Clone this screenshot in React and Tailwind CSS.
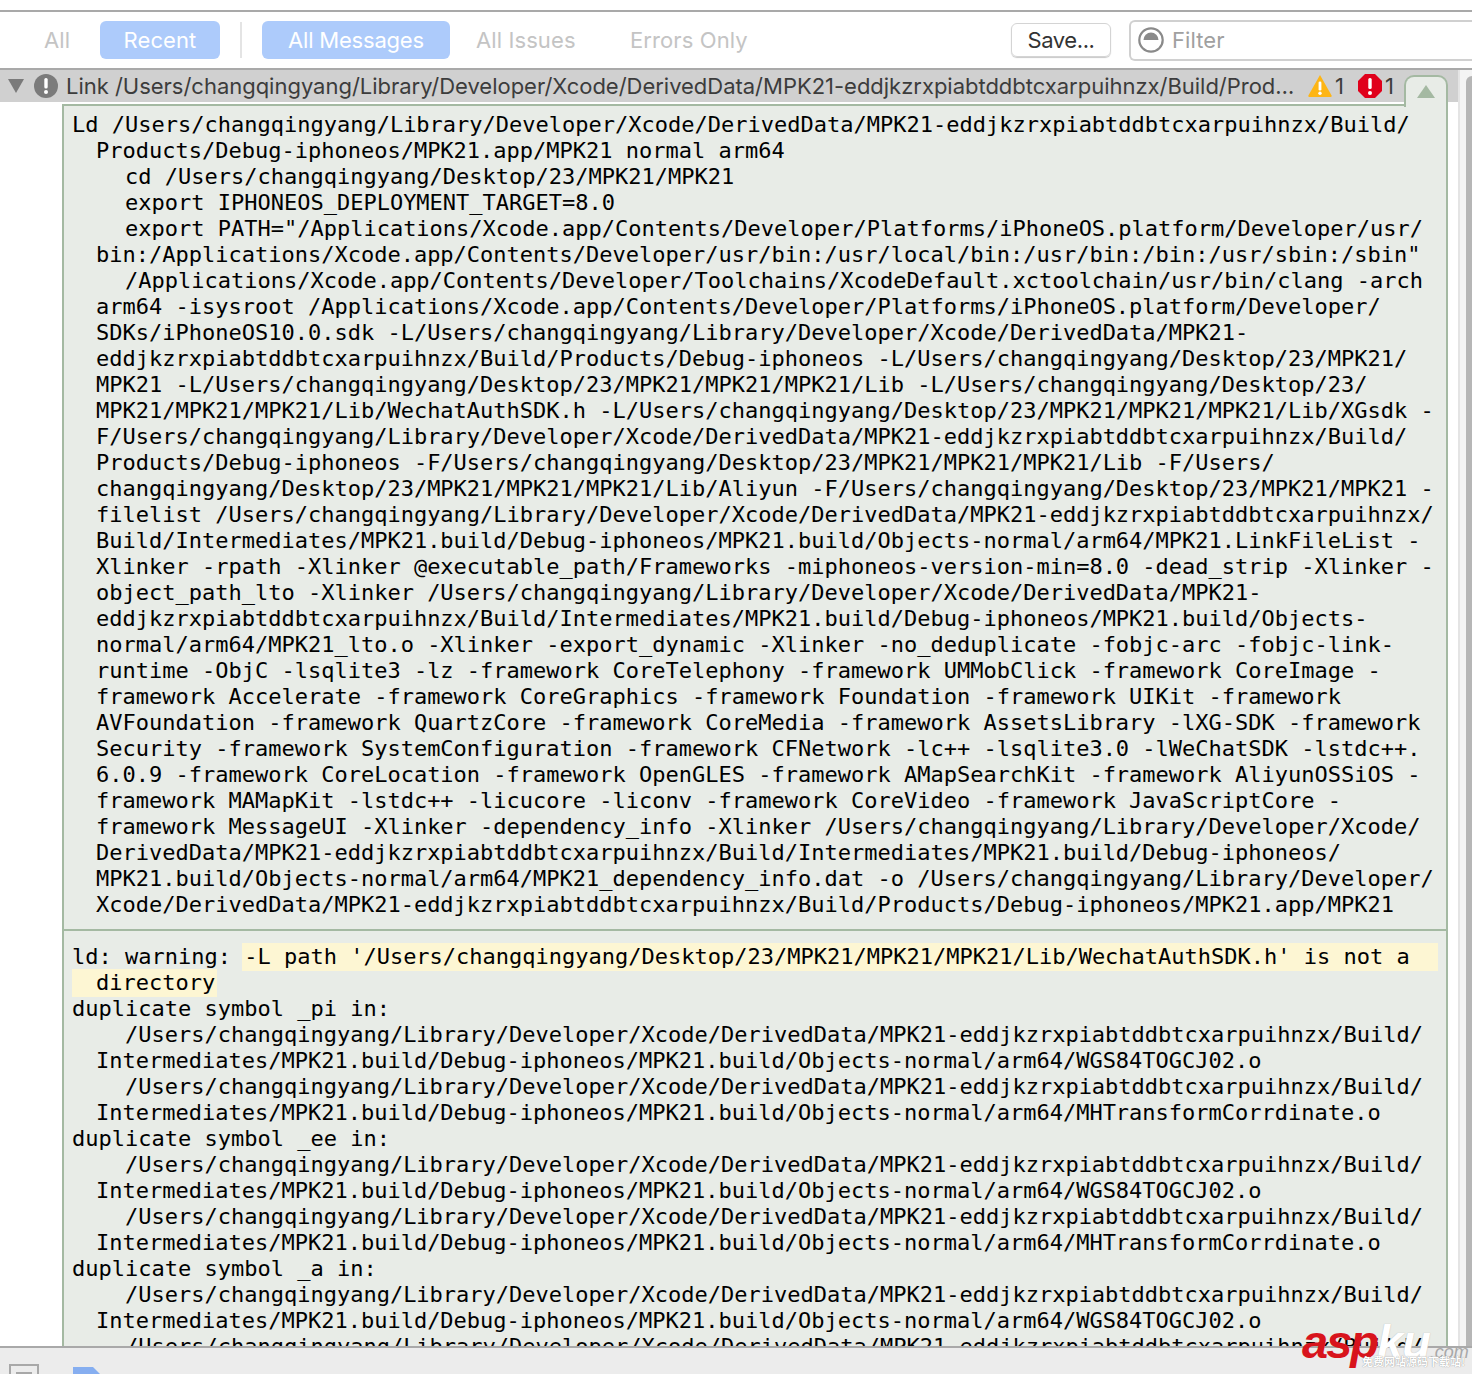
const block1 = [
"Ld /Users/changqingyang/Library/Developer/Xcode/DerivedData/MPK21-eddjkzrxpiabtddbtcxarpuihnzx/Build/",
"  Products/Debug-iphoneos/MPK21.app/MPK21 normal arm64",
"    cd /Users/changqingyang/Desktop/23/MPK21/MPK21",
"    export IPHONEOS_DEPLOYMENT_TARGET=8.0",
"    export PATH=\"/Applications/Xcode.app/Contents/Developer/Platforms/iPhoneOS.platform/Developer/usr/",
"  bin:/Applications/Xcode.app/Contents/Developer/usr/bin:/usr/local/bin:/usr/bin:/bin:/usr/sbin:/sbin\"",
"    /Applications/Xcode.app/Contents/Developer/Toolchains/XcodeDefault.xctoolchain/usr/bin/clang -arch",
"  arm64 -isysroot /Applications/Xcode.app/Contents/Developer/Platforms/iPhoneOS.platform/Developer/",
"  SDKs/iPhoneOS10.0.sdk -L/Users/changqingyang/Library/Developer/Xcode/DerivedData/MPK21-",
"  eddjkzrxpiabtddbtcxarpuihnzx/Build/Products/Debug-iphoneos -L/Users/changqingyang/Desktop/23/MPK21/",
"  MPK21 -L/Users/changqingyang/Desktop/23/MPK21/MPK21/MPK21/Lib -L/Users/changqingyang/Desktop/23/",
"  MPK21/MPK21/MPK21/Lib/WechatAuthSDK.h -L/Users/changqingyang/Desktop/23/MPK21/MPK21/MPK21/Lib/XGsdk -",
"  F/Users/changqingyang/Library/Developer/Xcode/DerivedData/MPK21-eddjkzrxpiabtddbtcxarpuihnzx/Build/",
"  Products/Debug-iphoneos -F/Users/changqingyang/Desktop/23/MPK21/MPK21/MPK21/Lib -F/Users/",
"  changqingyang/Desktop/23/MPK21/MPK21/MPK21/Lib/Aliyun -F/Users/changqingyang/Desktop/23/MPK21/MPK21 -",
"  filelist /Users/changqingyang/Library/Developer/Xcode/DerivedData/MPK21-eddjkzrxpiabtddbtcxarpuihnzx/",
"  Build/Intermediates/MPK21.build/Debug-iphoneos/MPK21.build/Objects-normal/arm64/MPK21.LinkFileList -",
"  Xlinker -rpath -Xlinker @executable_path/Frameworks -miphoneos-version-min=8.0 -dead_strip -Xlinker -",
"  object_path_lto -Xlinker /Users/changqingyang/Library/Developer/Xcode/DerivedData/MPK21-",
"  eddjkzrxpiabtddbtcxarpuihnzx/Build/Intermediates/MPK21.build/Debug-iphoneos/MPK21.build/Objects-",
"  normal/arm64/MPK21_lto.o -Xlinker -export_dynamic -Xlinker -no_deduplicate -fobjc-arc -fobjc-link-",
"  runtime -ObjC -lsqlite3 -lz -framework CoreTelephony -framework UMMobClick -framework CoreImage -",
"  framework Accelerate -framework CoreGraphics -framework Foundation -framework UIKit -framework",
"  AVFoundation -framework QuartzCore -framework CoreMedia -framework AssetsLibrary -lXG-SDK -framework",
"  Security -framework SystemConfiguration -framework CFNetwork -lc++ -lsqlite3.0 -lWeChatSDK -lstdc++.",
"  6.0.9 -framework CoreLocation -framework OpenGLES -framework AMapSearchKit -framework AliyunOSSiOS -",
"  framework MAMapKit -lstdc++ -licucore -liconv -framework CoreVideo -framework JavaScriptCore -",
"  framework MessageUI -Xlinker -dependency_info -Xlinker /Users/changqingyang/Library/Developer/Xcode/",
"  DerivedData/MPK21-eddjkzrxpiabtddbtcxarpuihnzx/Build/Intermediates/MPK21.build/Debug-iphoneos/",
"  MPK21.build/Objects-normal/arm64/MPK21_dependency_info.dat -o /Users/changqingyang/Library/Developer/",
"  Xcode/DerivedData/MPK21-eddjkzrxpiabtddbtcxarpuihnzx/Build/Products/Debug-iphoneos/MPK21.app/MPK21",
];
const p = "    /Users/changqingyang/Library/Developer/Xcode/DerivedData/MPK21-eddjkzrxpiabtddbtcxarpuihnzx/Build/";
const w = "  Intermediates/MPK21.build/Debug-iphoneos/MPK21.build/Objects-normal/arm64/WGS84TOGCJ02.o";
const m = "  Intermediates/MPK21.build/Debug-iphoneos/MPK21.build/Objects-normal/arm64/MHTransformCorrdinate.o";
const block2 = [
  "duplicate symbol _pi in:", p, w, p, m,
  "duplicate symbol _ee in:", p, w, p, m,
  "duplicate symbol _a in:", p, w, p, p,
];
const sans = "font-['Inter','Liberation_Sans',sans-serif]";
function Line({ text }) {
  const hanging = text.startsWith("  ") && !text.startsWith("    ");
  return hanging
    ? <div className="h-[26px] pl-[24px]">{text.slice(2)}</div>
    : <div className="h-[26px]">{text}</div>;
}
export default function App() {
  return (
    <div className={`w-[1472px] h-[1374px] overflow-hidden flex flex-col bg-white relative ${sans}`}>
      <div className="h-[10px] shrink-0 bg-white" />
      <div className="h-[60px] shrink-0 border-y-2 border-[#a9a9a9] bg-white flex items-center text-[22px] tracking-[0.1px] pl-[44px] overflow-hidden">
        <span className="text-[#c4c4c4] w-[56px] shrink-0">All</span>
        <span className="w-[120px] shrink-0 h-[38px] rounded-[6px] bg-[#adcbfb] text-white flex items-center justify-center">Recent</span>
        <span className="w-[2px] shrink-0 h-[36px] bg-[#e4e4e4] mx-[20px]" />
        <span className="w-[188px] shrink-0 h-[38px] rounded-[6px] bg-[#adcbfb] text-white flex items-center justify-center tracking-[-0.2px]">All Messages</span>
        <span className="text-[#c4c4c4] ml-[26px] w-[154px] shrink-0">All Issues</span>
        <span className="text-[#c4c4c4] w-[381px] shrink-0">Errors Only</span>
        <span className="w-[100px] shrink-0 h-[34px] rounded-[6px] border border-[#d4d4d4] shadow-[0_1px_1px_#c8c8c8] text-[#333] flex items-center justify-center tracking-[-0.4px]">Save...</span>
        <div className="ml-[18px] w-[360px] h-[41px] shrink-0 rounded-l-[6px] border-2 border-[#d0d0d0] border-r-0 flex items-center pl-[7px] gap-[8px] text-[#a0a0a0]">
          <svg width="26" height="26" viewBox="0 0 26 26" className="shrink-0">
            <circle cx="13" cy="13" r="11.7" fill="#fff" stroke="#8a8a8a" strokeWidth="2.2" />
            <path d="M5.5 13a7.5 7.5 0 0 1 15 0z" fill="#8a8a8a" />
          </svg>
          <span>Filter</span>
        </div>
      </div>
      <div className="h-[32px] shrink-0 flex bg-[#d0d0d0]">
        <div className="w-[1458px] shrink-0 flex items-center pl-[7px] text-[22px] text-[#3c3c3c]">
          <svg width="18" height="16" viewBox="0 0 18 16" className="shrink-0">
            <path d="M1 1h16l-8 14z" fill="#7a7a7a" />
          </svg>
          <svg width="26" height="26" viewBox="0 0 26 26" className="shrink-0 ml-[8px]">
            <circle cx="13" cy="13" r="12" fill="#7b7b7b" />
            <rect x="11.3" y="5" width="3.4" height="10.5" rx="1.5" fill="#fff" />
            <circle cx="13" cy="19" r="2" fill="#fff" />
          </svg>
          <span className="ml-[7px] w-[1232px] shrink-0 truncate tracking-[-0.02px]">Link /Users/changqingyang/Library/Developer/Xcode/DerivedData/MPK21-eddjkzrxpiabtddbtcxarpuihnzx/Build/Products/Debug-iphoneos/MPK21.app/MPK21 normal arm64</span>
          <svg width="24" height="24" viewBox="0 0 24 24" className="shrink-0 ml-[10px]">
            <path d="M12 1 23.6 21.5a1 1 0 0 1-.9 1.5H1.3a1 1 0 0 1-.9-1.5z" fill="#fdb515" />
            <rect x="10.6" y="7.5" width="2.8" height="9" rx="1.3" fill="#fff" />
            <circle cx="12" cy="19.3" r="1.7" fill="#fff" />
          </svg>
          <span className="ml-[3px] w-[23px] shrink-0">1</span>
          <svg width="24" height="24" viewBox="0 0 24 24" className="shrink-0">
            <path d="M7 0h10l7 7v10l-7 7H7l-7-7V7z" fill="#e0001b" />
            <rect x="10.3" y="4" width="3.4" height="11" rx="1.5" fill="#fff" />
            <circle cx="12" cy="19" r="2" fill="#fff" />
          </svg>
          <span className="ml-[3px] shrink-0">1</span>
        </div>
        <div className="flex-1 border-l-2 border-[#e4e4e4] bg-[#f4f4f4]" />
      </div>
      <div className="flex-1 min-h-0 flex overflow-hidden">
        <div className="w-[62px] shrink-0 bg-white" />
        <div className="w-[1386px] shrink-0 mt-[2px] bg-[#e8ece7] border-x-2 border-t-2 border-[#a4b9a2] font-['DejaVu_Sans_Mono',monospace] text-[22px] leading-[26px] text-black whitespace-pre">
          <div className="pl-[8px] pt-[6px] pb-[11px] border-b-2 border-[#a4b9a2]">
            {block1.map((l, i) => <Line key={i} text={l} />)}
          </div>
          <div className="pl-[8px] pt-[13px]">
            <div className="flex h-[26px] mr-[8px]">
              <span>ld: warning: </span>
              <span className="flex-1 -ml-[2px] pl-[2px] -my-[1px] pt-[1px] bg-[#fdf6d3]">-L path '/Users/changqingyang/Desktop/23/MPK21/MPK21/MPK21/Lib/WechatAuthSDK.h' is not a</span>
            </div>
            <div className="h-[28px] -my-[1px] py-[1px] w-fit pl-[24px] pr-[2px] bg-[#fdf6d3]">directory</div>
            {block2.map((l, i) => <Line key={i} text={l} />)}
          </div>
        </div>
        <div className="w-[10px] shrink-0 bg-white" />
        <div className="flex-1 border-l-2 border-[#e4e4e4] bg-[#f4f4f4]" />
      </div>
      <div className="h-[28px] shrink-0 border-t-2 border-[#a9a9a9] bg-[#ececec] flex items-start overflow-hidden pl-[9px] pt-[16px]">
        <div className="w-[30px] h-[20px] border-2 border-[#a8a8a8] shrink-0 flex justify-center pt-[6px]">
          <span className="w-[16px] h-[4px] bg-[#a8a8a8]" />
        </div>
        <svg width="28" height="12" viewBox="0 0 28 12" className="ml-[34px] mt-[3px] shrink-0">
          <path d="M0 0h20l8 8v4H0z" fill="#86aef0" />
        </svg>
      </div>

      {/* scroll thumb over the track */}
      <div className="absolute left-[1466px] top-[76px] w-[6px] h-[1270px] rounded-tl-[6px] bg-[#b6b6b6]" />

      {/* page tab over the panel's top edge */}
      <div className="absolute left-[1404px] top-[75px] w-[44px] h-[32px] bg-[#e8ece7] border-x-2 border-t-2 border-[#a4b9a2] rounded-t-[10px] flex justify-center pt-[8px]">
        <svg width="18" height="13" viewBox="0 0 18 13"><path d="M9 0l9 13H0z" fill="#a4b9a2" /></svg>
      </div>

      {/* watermark */}
      <div className="absolute left-[1302px] top-[1318px] flex items-baseline font-['Liberation_Sans',sans-serif] italic font-bold leading-none">
        <span className="text-[47px] text-[#d8141c] tracking-[-2px]">asp</span>
        <span className="text-[47px] text-white tracking-[-1px] [text-shadow:0_0_1px_#aaa]">ku</span>
        <span className="text-[18px] font-normal text-[#a8a8a8]">.com</span>
      </div>
      <div className="absolute left-[1362px] top-[1355px] text-[11px] leading-[13px] font-bold text-white font-['Noto_Sans_CJK_SC',sans-serif] [text-shadow:0_0_1px_#777]">免费网站源码下载站!</div>
    </div>
  );
}
